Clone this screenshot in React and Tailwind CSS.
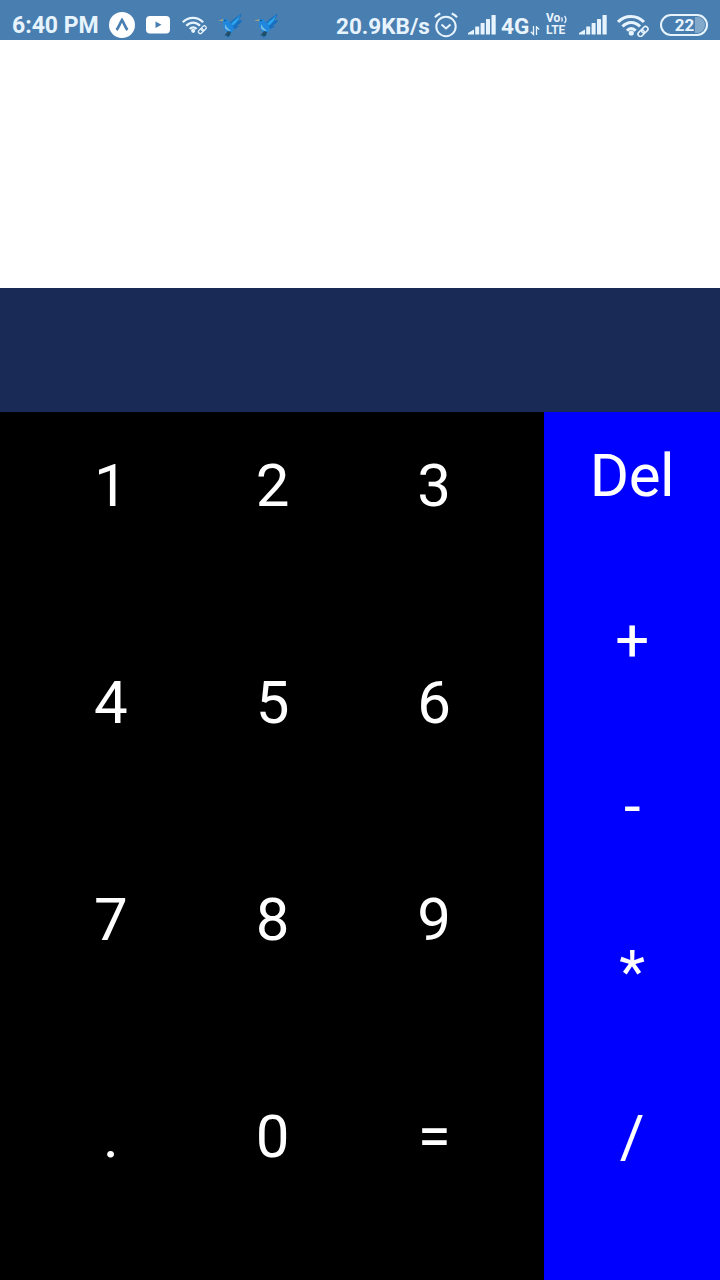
function Signal() {
  return (
    <svg className="h-5 w-7 shrink-0" viewBox="0 0 28 20" fill="#e8f4fd">
      <path d="M0 19.500V18L6 14.500v5z" />
      <rect x="7.200" y="11.500" width="4" height="8" rx=".5" />
      <rect x="12.600" y="8" width="4" height="11.500" rx=".5" />
      <rect x="18" y="4" width="4" height="15.500" rx=".5" />
      <rect x="23.500" y="0" width="4.200" height="19.500" rx=".5" />
    </svg>
  );
}

function WifiLink({ className }) {
  return (
    <svg className={className} viewBox="0 0 32 22" fill="none" stroke="#e8f4fd">
      <g strokeWidth="3">
        <path d="M1 7.500C8 0 20 0 27 7.500" />
        <path d="M5.500 12C10.500 6.500 18 6.500 23 12" />
        <path d="M10 16.200C12.500 13.200 16 13.200 18.600 16.200" />
      </g>
      <circle cx="14.300" cy="18.500" r="2.600" fill="#e8f4fd" stroke="none" />
      <g strokeWidth="1.600" transform="rotate(-45 26 17)">
        <rect x="20" y="14.600" width="7" height="4.800" rx="2.400" />
        <rect x="25" y="14.600" width="7" height="4.800" rx="2.400" />
      </g>
    </svg>
  );
}

function Bird() {
  return (
    <svg className="h-[25px] w-[25px] shrink-0" viewBox="0 0 25 25">
      <path d="M0 7.200L6 6.300 7 8.500z" fill="#b3a878" />
      <path d="M11 12C13 7 18 5 23.500.5c-.6 4-2 5.500-3.500 7 1.800 0 3.200-.2 4.200-.8-1 3.300-3.200 5-6.200 6l3 .2c-2 2.500-5 3.500-8 3z" fill="#176fc0" />
      <path d="M13 11c3-4 6-4.500 9-9-1.200 5-3 7.500-7 10.500z" fill="#2ca4ec" />
      <path d="M5 8c0-3 4.500-3 5.500 0 1 2 4 3 5 6 .8 2.500-.5 4-2.500 6l-2 4.500-3-.5 1.500-5C6 17 5 13 5 8z" fill="#1f88de" />
      <path d="M7 11c1 3 4 5 6 7-3 0-5-1-6-3z" fill="#79bde2" />
      <path d="M10 18l-3.500 4.500 3 .3-.5 1.700 3-2 1-3.500z" fill="#234e68" />
      <circle cx="7" cy="7.500" r=".7" fill="#123b59" />
    </svg>
  );
}

function StatusBar() {
  return (
    <header className="flex h-10 shrink-0 items-start bg-[#487eb0] text-[#e8f4fd]">
      <span className="ml-3 mt-[13px] w-[97px] whitespace-nowrap text-[23px] leading-[26px] font-bold">6:40 PM</span>
      <svg className="mt-3 h-[26px] w-[26px] shrink-0" viewBox="0 0 26 26">
        <circle cx="13" cy="13" r="13" fill="white" />
        <path d="M7.500 18C9.500 16 10.500 12 13 8c2.500 4 3.500 8 5.500 10" fill="none" stroke="#487eb0" strokeWidth="2.600" />
      </svg>
      <svg className="ml-[11px] mt-4 h-[18px] w-6 shrink-0" viewBox="0 0 24 18">
        <rect width="24" height="17.500" rx="4" fill="white" />
        <path d="M9.500 5.500l6 3.300-6 3.300z" fill="#487eb0" />
      </svg>
      <WifiLink className="ml-3 mt-[15px] h-[20px] w-[25px] shrink-0" />
      <div className="ml-[11px] mt-[13px] flex gap-[11px]">
        <Bird />
        <Bird />
      </div>
      <span className="ml-auto mt-[13px] w-[98px] whitespace-nowrap text-[22.500px] leading-[26px] font-bold">20.9KB/s</span>
      <svg className="mt-3 h-[26px] w-6 shrink-0" viewBox="0 0 24 26" fill="none" stroke="#e8f4fd" strokeWidth="2">
        <circle cx="12" cy="14.500" r="9.700" />
        <path d="M.9 5.200C2.500 3.500 4.200 2.300 6.300 1.500M17.700 1.500c2.100.8 3.800 2 5.400 3.700M7.500 12.500l4.500 4 4.500-4" />
      </svg>
      <div className="ml-[10px] mt-[15px]"><Signal /></div>
      <span className="ml-[5px] mt-[13px] w-[29px] text-[22.500px] leading-[26px] font-bold">4G</span>
      <svg className="mt-[26px] h-2.5 w-2.5 shrink-0" viewBox="0 0 10 10" fill="none" stroke="#e8f4fd" strokeWidth="1.300">
        <path d="M3.500 0v8.500L.8 5.800M6.500 9V.8l2.700 2.700" />
      </svg>
      <div className="ml-[6px] mt-[12px] flex w-6 flex-col text-[12px] leading-[12px] font-bold">
        <span className="flex h-[12px]">
          Vo
          <svg className="mt-[3px] h-[9px] w-[8px] shrink-0" viewBox="0 0 8 9" fill="none" stroke="#e8f4fd" strokeWidth="1.300">
            <path d="M1.500 2.500q1.500 2 0 4M4.500 1q3 3.500 0 7" />
          </svg>
        </span>
        <span>LTE</span>
      </div>
      <div className="ml-[9px] mt-[15px]"><Signal /></div>
      <WifiLink className="ml-[10px] mt-[14px] h-[23px] w-8 shrink-0" />
      <div className="ml-[11px] mr-[12px] mt-[14px] flex h-[22px] w-12 shrink-0 rounded-full border-2 border-[#e8f4fd] p-px">
        <div className="flex w-full items-center justify-center rounded-full bg-linear-to-r from-transparent from-76% to-[#82a8ca] to-76% pl-px text-[17px] leading-4 font-bold">22</div>
      </div>
    </header>
  );
}

const digits = ["1", "2", "3", "4", "5", "6", "7", "8", "9", ".", "0", "="];
const operators = ["Del", "+", "-", "*", "/"];

export default function App() {
  return (
    <main className="flex h-screen w-full flex-col overflow-hidden bg-white font-[Roboto,sans-serif]">
      <StatusBar />
      <section className="h-[248px] shrink-0 bg-white" />
      <section className="h-[124px] shrink-0 bg-[#192a56]" />
      <section className="flex min-h-0 flex-1 text-[60px] leading-[70px] text-white">
        <div className="grid w-[544px] grid-cols-3 grid-rows-4 bg-black pr-[29px] pl-[30px]">
          {digits.map((digit) => (
            <button key={digit} className="flex items-start justify-center pt-[39px]">{digit}</button>
          ))}
        </div>
        <div className="flex flex-1 flex-col bg-[#0000ff] pt-[29px]">
          {operators.map((operator) => (
            <button key={operator} className="flex h-[165.300px] shrink-0 items-start justify-center tracking-[-0.5px]">{operator}</button>
          ))}
        </div>
      </section>
    </main>
  );
}
